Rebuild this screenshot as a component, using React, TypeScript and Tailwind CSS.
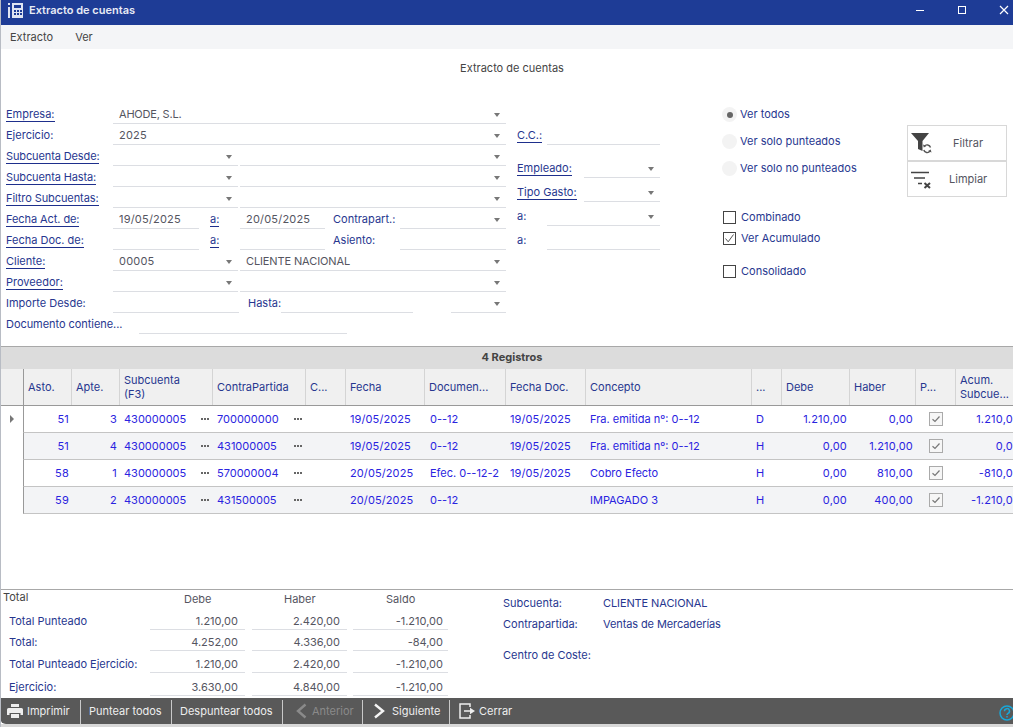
const FONT = "font-['Inter','Liberation_Sans',sans-serif]";

function Arrow({ right = 6 }: { right?: number }) {
  return (
    <span className="absolute top-[9px] h-0 w-0 border-x-[3.5px] border-t-[4px] border-x-transparent border-t-[#777777]" style={{ right }} />
  );
}

function Label({ children, u = false, w }: { children: React.ReactNode; u?: boolean; w: string }) {
  return (
    <div className={`${w} shrink-0 whitespace-nowrap text-[#27378f]`}>
      <span className={u ? "border-b border-[#1e2f8c]" : ""}>{children}</span>
    </div>
  );
}

function Field({ w, value, arrow = false, cls = "" }: { w: string; value?: string; arrow?: boolean; cls?: string }) {
  return (
    <div className={`${w} ${cls} relative h-[20px] shrink-0 border-b border-[#dcdee3] pl-[6px] leading-[20px] text-[#55555f]`}>
      {value}
      {arrow && <Arrow />}
    </div>
  );
}

function Row({ children }: { children: React.ReactNode }) {
  return <div className="flex h-[21px] items-start leading-[20px]">{children}</div>;
}

function Radio({ label, on = false }: { label: string; on?: boolean }) {
  return (
    <div className="flex h-[27px] items-center gap-[3px]">
      <span className="flex h-[15px] w-[15px] items-center justify-center rounded-full bg-[#f3f3f3]">
        {on && <span className="h-[6px] w-[6px] rounded-full bg-[#666666]" />}
      </span>
      <span className="text-[#27378f]">{label}</span>
    </div>
  );
}

function Check({ label, on = false, cls = "" }: { label: string; on?: boolean; cls?: string }) {
  return (
    <div className={`flex h-[21px] items-center gap-[5px] pl-[1px] ${cls}`}>
      <span className="flex h-[13px] w-[13px] items-center justify-center border border-[#444444] bg-white">
        {on && (
          <svg width="11" height="11" viewBox="0 0 11 11" fill="none" stroke="#555" strokeWidth="1">
            <path d="M1.500 5.500 L4.200 8.800 L9.500 1.500" />
          </svg>
        )}
      </span>
      <span className="text-[#27378f]">{label}</span>
    </div>
  );
}

const COLS = "grid grid-cols-[23px_49px_48px_93px_93px_40px_79px_81px_80px_166px_30px_68px_66px_40px_67px]";

const headers = ["Asto.", "Apte.", "Subcuenta\n(F3)", "ContraPartida", "C...", "Fecha", "Documen...", "Fecha Doc.", "Concepto", "...", "Debe", "Haber", "P...", "Acum.\nSubcue..."];

const rows = [
  ["51", "3", "430000005", "700000000", "19/05/2025", "0--12", "19/05/2025", "Fra. emitida nº: 0--12", "D", "1.210,00", "0,00", "1.210,00"],
  ["51", "4", "430000005", "431000005", "19/05/2025", "0--12", "19/05/2025", "Fra. emitida nº: 0--12", "H", "0,00", "1.210,00", "0,00"],
  ["58", "1", "430000005", "570000004", "20/05/2025", "Efec. 0--12-2", "19/05/2025", "Cobro Efecto", "H", "0,00", "810,00", "-810,00"],
  ["59", "2", "430000005", "431500005", "20/05/2025", "0--12", "", "IMPAGADO 3", "H", "0,00", "400,00", "-1.210,00"],
];

function Dots() {
  return (
    <span className="flex h-full w-full items-center justify-end gap-px pr-[4px]">
      <i className="h-[2px] w-[2px] bg-[#666]" />
      <i className="h-[2px] w-[2px] bg-[#666]" />
      <i className="h-[2px] w-[2px] bg-[#666]" />
    </span>
  );
}

function Cell({ v, right = false, cls = "" }: { v: string; right?: boolean; cls?: string }) {
  return <div className={`truncate ${right ? "pr-[3px] text-right tracking-[0.2px]" : "pl-[4px]"} ${cls} leading-[26px]`}>{v}</div>;
}

function GridRow({ r, i }: { r: string[]; i: number }) {
  return (
    <div className={`${COLS} h-[27px] text-[#2a23e0]`}>
      <div className="relative">
        {i === 0 && <span className="absolute left-[10px] top-[9px] h-0 w-0 border-y-[4px] border-l-[4px] border-y-transparent border-l-[#777]" />}
      </div>
      <div className={`col-span-14 grid grid-cols-subgrid border-b border-l border-[#c4c4c4] border-l-[#999] ${i % 2 ? "bg-[#f3f4f6]" : "bg-white"}`}>
        <Cell v={r[0]} right />
        <Cell v={r[1]} right />
        <div className="relative"><Cell v={r[2]} /><div className="absolute inset-0"><Dots /></div></div>
        <div className="relative"><Cell v={r[3]} /><div className="absolute inset-0"><Dots /></div></div>
        <div />
        <Cell v={r[4]} cls="tracking-[0.1px]" />
        <Cell v={r[5]} cls="pl-[5px]" />
        <Cell v={r[6]} cls="tracking-[0.1px]" />
        <Cell v={r[7]} />
        <Cell v={r[8]} />
        <Cell v={r[9]} right />
        <Cell v={r[10]} right />
        <div className="flex items-center justify-center">
          <span className="flex h-[14px] w-[14px] items-center justify-center border border-[#aaaaaa] bg-[#f6f6f6]">
            <svg width="10" height="10" viewBox="0 0 10 10" fill="none" stroke="#777" strokeWidth="1.200"><path d="M1.500 5.200 L4 7.500 L8.500 2.500" /></svg>
          </span>
        </div>
        <Cell v={r[11]} right />
      </div>
    </div>
  );
}

function Sum({ label, a, b, c, h }: { label: string; a: string; b: string; c: string; h: string }) {
  return (
    <div className={`flex ${h} items-start`}>
      <div className="w-[150px] shrink-0 pl-[9px] leading-[18px] text-[#27378f]">{label}</div>
      <div className="h-[18px] w-[95px] shrink-0 border-b border-[#dcdee3] pr-[7px] text-right leading-[18px] text-[#55555f]">{a}</div>
      <div className="ml-[7px] h-[18px] w-[95px] shrink-0 border-b border-[#dcdee3] pr-[7px] text-right leading-[18px] text-[#55555f]">{b}</div>
      <div className="ml-[6px] h-[18px] w-[95px] shrink-0 border-b border-[#dcdee3] pr-[5px] text-right leading-[18px] text-[#55555f]">{c}</div>
    </div>
  );
}

function Sep() {
  return <span className="h-[24px] w-px shrink-0 self-end bg-[#c9c9c9]" />;
}

export default function App() {
  return (
    <div className={`${FONT} relative flex h-[727px] w-[1013px] flex-col overflow-hidden bg-white text-[11px]`}>
      <div className="absolute inset-y-0 left-0 z-10 w-px bg-[#b8bcc4]" />
      <div className="flex h-[25px] shrink-0 items-center bg-[#1e3c96] pb-[5px] pl-[8px] text-white">
        <svg width="16" height="17" viewBox="0 0 16 17" fill="none">
          <rect x="0" y="5" width="2" height="11" fill="#dfe4f2" />
          <rect x="0" y="1" width="2" height="2" fill="#dfe4f2" />
          <path d="M4 1h11v15H4z" fill="#dfe4f2" />
          <rect x="6" y="3" width="7" height="3" fill="#1e3c96" />
          <rect x="6" y="8" width="2" height="2" fill="#1e3c96" /><rect x="9" y="8" width="2" height="2" fill="#1e3c96" /><rect x="12" y="8" width="2" height="2" fill="#1e3c96" />
          <rect x="6" y="11" width="2" height="2" fill="#1e3c96" /><rect x="9" y="11" width="2" height="2" fill="#1e3c96" /><rect x="12" y="11" width="2" height="2" fill="#1e3c96" />
        </svg>
        <span className="ml-[5px] font-semibold text-[#e8ebf5]">Extracto de cuentas</span>
        <div className="ml-auto flex items-center">
          <svg width="12" height="12" viewBox="0 0 12 12" className="mr-[30px]"><path d="M2 6.500h8" stroke="#fff" strokeWidth="1" /></svg>
          <svg width="12" height="12" viewBox="0 0 12 12" fill="none" className="mr-[30px]"><rect x="2.500" y="2.500" width="7" height="7" stroke="#fff" strokeWidth="1" /></svg>
          <svg width="12" height="12" viewBox="0 0 12 12" className="mr-[3px]"><path d="M2 2l8 8M10 2l-8 8" stroke="#fff" strokeWidth="1.200" /></svg>
        </div>
      </div>

      <div className="flex h-[24px] shrink-0 items-center bg-[#f4f5f7] pl-[10px] text-[#444444]">
        <span className="mr-[22px]">Extracto</span>
        <span>Ver</span>
      </div>

      <div className="flex h-[55px] shrink-0 justify-center pt-[11px] text-[#444444]">
        <span className="ml-[11px]">Extracto de cuentas</span>
      </div>

      <div className="flex h-[242px] shrink-0 pl-[6px]">
        <div className="w-[511px] shrink-0">
          <Row><Label u w="w-[107px]">Empresa:</Label><Field w="w-[393px] tracking-[-0.2px]" value="AHODE, S.L." arrow /></Row>
          <Row><Label w="w-[107px]">Ejercicio:</Label><Field w="w-[393px] tracking-[0.2px]" value="2025" arrow /></Row>
          <Row><Label u w="w-[107px] tracking-[-0.12px]">Subcuenta Desde:</Label><Field w="w-[125px]" arrow /><Field w="w-[266px]" cls="ml-[2px]" arrow /></Row>
          <Row><Label u w="w-[107px] tracking-[-0.12px]">Subcuenta Hasta:</Label><Field w="w-[125px]" arrow /><Field w="w-[266px]" cls="ml-[2px]" arrow /></Row>
          <Row><Label u w="w-[107px] tracking-[-0.08px]">Filtro Subcuentas:</Label><Field w="w-[125px]" arrow /><Field w="w-[266px]" cls="ml-[2px]" arrow /></Row>
          <Row>
            <Label u w="w-[107px] tracking-[-0.08px]">Fecha Act. de:</Label><Field w="w-[86px] tracking-[0.2px]" value="19/05/2025" />
            <Label u w="ml-[11px] w-[30px]">a:</Label><Field w="w-[85px] tracking-[0.2px]" value="20/05/2025" />
            <Label w="ml-[8px] w-[67px]">Contrapart.:</Label><Field w="w-[106px]" arrow />
          </Row>
          <Row>
            <Label u w="w-[107px]">Fecha Doc. de:</Label><Field w="w-[86px]" />
            <Label u w="ml-[11px] w-[30px]">a:</Label><Field w="w-[85px]" />
            <Label w="ml-[8px] w-[67px]">Asiento:</Label><Field w="w-[106px]" />
          </Row>
          <Row><Label u w="w-[107px]">Cliente:</Label><Field w="w-[125px] tracking-[0.2px]" value="00005" arrow /><Field w="w-[266px] tracking-[-0.12px]" cls="ml-[2px]" value="CLIENTE NACIONAL" arrow /></Row>
          <Row><Label u w="w-[107px]">Proveedor:</Label><Field w="w-[125px]" arrow /><Field w="w-[266px]" cls="ml-[2px]" arrow /></Row>
          <Row>
            <Label w="w-[107px]">Importe Desde:</Label><Field w="w-[126px]" />
            <Label w="ml-[9px] w-[33px]">Hasta:</Label><Field w="w-[132px]" /><Field w="ml-[38px] w-[55px]" arrow />
          </Row>
          <Row><Label w="w-[133px] tracking-[-0.05px]">Documento contiene...</Label><Field w="w-[208px]" /></Row>
        </div>

        <div className="w-[205px] shrink-0">
          <div className="mt-[21px]"><Row><Label u w="w-[30px]">C.C.:</Label><Field w="w-[113px]" /></Row></div>
          <div className="mt-[12px] flex flex-col gap-[3px]">
            <Row><Label u w="w-[67px]">Empleado:</Label><Field w="w-[76px]" arrow /></Row>
            <Row><Label u w="w-[67px]">Tipo Gasto:</Label><Field w="w-[76px]" arrow /></Row>
            <Row><Label w="w-[30px]">a:</Label><Field w="w-[113px]" arrow /></Row>
            <Row><Label w="w-[30px]">a:</Label><Field w="w-[113px]" /></Row>
          </div>
        </div>

        <div className="-mt-[3px] w-[185px] shrink-0">
          <Radio label="Ver todos" on />
          <Radio label="Ver solo punteados" />
          <Radio label="Ver solo no punteados" />
          <div className="mt-[25px]">
            <Check label="Combinado" />
            <Check label="Ver Acumulado" on />
            <Check label="Consolidado" cls="mt-[12px]" />
          </div>
        </div>

        <div className="mt-[21px] flex w-[100px] shrink-0 flex-col">
          <div className="flex h-[36px] items-center border border-[#d8d8d8] pl-[3px] text-[#55555f]">
            <svg width="22" height="22" viewBox="0 0 22 22">
              <path d="M0 1h18l-6.500 8v10l-4.500-2V9z" fill="#444" />
              <path d="M19.500 15.500a3.500 3.500 0 0 0-6.200-1.200M12.800 18a3.500 3.500 0 0 0 6.200 1.200" fill="none" stroke="#555" strokeWidth="1.400" />
              <path d="M12 12.500l.8 3 2.600-1.500zM20.500 20.500l-.8-3-2.600 1.500z" fill="#555" />
            </svg>
            <span className="ml-[20px]">Filtrar</span>
          </div>
          <div className="flex h-[36px] items-center border border-[#d8d8d8] pl-[3px] text-[#55555f]">
            <svg width="22" height="22" viewBox="0 0 22 22" fill="none" stroke="#444" strokeWidth="1.600">
              <path d="M0 4.500h18M3 10h11M7 15.500h4" />
              <path d="M13.500 15l5.500 5M19 15l-5.500 5" strokeWidth="2" />
            </svg>
            <span className="ml-[16px]">Limpiar</span>
          </div>
        </div>
      </div>

      <div className="h-[243px] shrink-0 overflow-hidden border-t border-[#a8a8a8]">
        <div className="h-[22px] bg-[#dcdcdc] pl-[11px] text-center font-bold leading-[21px] text-[#444444]">4 Registros</div>
        <div className={`${COLS} h-[37px] border-b border-[#999] bg-[#f0f0f0] text-[#27378f]`}>
          <div />
          {headers.map((h, i) => (
            <div key={i} className={`flex items-center whitespace-pre-line border-r border-[#d4d4d4] pl-[4px] pr-[2px] leading-[14px] ${i === 0 ? "border-l border-l-[#999]" : ""}`}>{h}</div>
          ))}
        </div>
        {rows.map((r, i) => <GridRow key={i} r={r} i={i} />)}
      </div>

      <div className="relative flex h-[109px] shrink-0 border-t border-[#a8a8a8]">
        <div className="w-[503px] shrink-0">
          <div className="flex h-[22px]">
            <div className="w-[184px] pl-[3px] leading-[14px] text-[#444]">Total</div>
            <div className="w-[100px] pt-[2px] leading-[14px] text-[#55555f]">Debe</div>
            <div className="w-[102px] pt-[2px] leading-[14px] text-[#55555f]">Haber</div>
            <div className="pt-[2px] leading-[14px] text-[#55555f]">Saldo</div>
          </div>
          <Sum h="h-[21px]" label="Total Punteado" a="1.210,00" b="2.420,00" c="-1.210,00" />
          <Sum h="h-[22px]" label="Total:" a="4.252,00" b="4.336,00" c="-84,00" />
          <Sum h="h-[23px]" label="Total Punteado Ejercicio:" a="1.210,00" b="2.420,00" c="-1.210,00" />
          <Sum h="h-[18px]" label="Ejercicio:" a="3.630,00" b="4.840,00" c="-1.210,00" />
        </div>
        <div className="pt-[6px] leading-[14px] text-[#27378f]">
          <div className="flex h-[21px]"><span className="w-[100px]">Subcuenta:</span><span className="tracking-[-0.1px]">CLIENTE NACIONAL</span></div>
          <div className="flex h-[31px]"><span className="w-[100px]">Contrapartida:</span><span className="tracking-[-0.1px]">Ventas de Mercaderías</span></div>
          <div className="flex"><span className="w-[100px]">Centro de Coste:</span></div>
        </div>
      </div>

      <div className="relative flex h-[26px] shrink-0 items-center rounded-bl-[6px] bg-[#595959] text-[#eeeeee]">
        <svg width="16" height="16" viewBox="0 0 16 16" className="ml-[7px]" fill="#eee">
          <path d="M4 1h8v3H4zM1.500 5h13A1.500 1.500 0 0 1 16 6.500V12h-2.500v-2h-11v2H0V6.500A1.500 1.500 0 0 1 1.500 5zM4 11h8v4H4z" />
        </svg>
        <span className="ml-[4px] mt-px w-[53px]">Imprimir</span>
        <Sep />
        <span className="ml-[8px] w-[82px]">Puntear todos</span>
        <Sep />
        <span className="ml-[8px] w-[102px]">Despuntear todos</span>
        <Sep />
        <svg width="12" height="16" viewBox="0 0 12 16" className="ml-[12px]" fill="none" stroke="#8a8a8a" strokeWidth="2.400"><path d="M10.500 1.500L3 8l7.500 6.500" /></svg>
        <span className="ml-[5px] mt-px w-[50px] text-[#8a8a8a]">Anterior</span>
        <Sep />
        <svg width="12" height="16" viewBox="0 0 12 16" className="ml-[10px]" fill="none" stroke="#f4f4f4" strokeWidth="2.400"><path d="M2 1.500L10 8l-8 6.500" /></svg>
        <span className="ml-[7px] mt-px w-[57px]">Siguiente</span>
        <Sep />
        <svg width="16" height="16" viewBox="0 0 16 16" className="ml-[9px]" fill="none" stroke="#eee" strokeWidth="1.500">
          <path d="M11 4V1H1v14h10v-3M5 8h7" />
          <path d="M11 4.800L16 8l-5 3.200z" fill="#eee" stroke="none" />
        </svg>
        <span className="ml-[4px] mt-px">Cerrar</span>
        <svg width="16" height="16" viewBox="0 0 16 16" className="absolute right-[-2px] top-[7px]" fill="none" stroke="#19a7d9" strokeWidth="1.500">
          <circle cx="8" cy="8" r="7" />
          <path d="M5.500 6.200a2.500 2.500 0 1 1 3.500 2.200c-.7.400-1 .8-1 1.500M8 11v1.500" />
        </svg>
      </div>
      <div className="h-[3px] flex-1 bg-[#d8d8d8]" />
    </div>
  );
}
